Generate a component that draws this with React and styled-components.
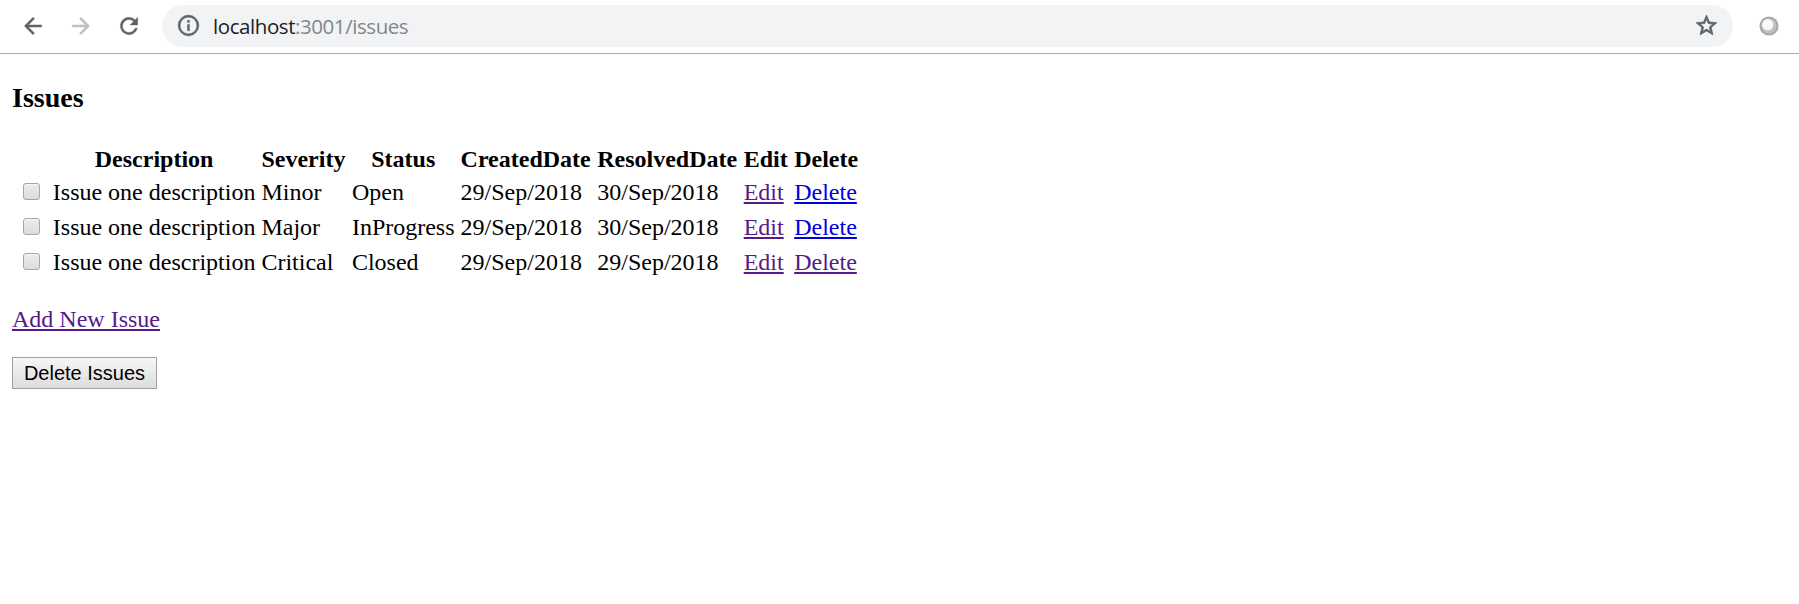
import React from "react";
import styled, { createGlobalStyle } from "styled-components";

const GlobalStyle = createGlobalStyle`
  body { margin: 0; background: #fff; color: #000; font-family: "Liberation Serif", "Times New Roman", serif; font-size: 24px; }
`;

const Toolbar = styled.header`
  box-sizing: border-box;
  display: flex;
  align-items: center;
  height: 54px;
  padding: 0 20px 2px 20px;
  border-bottom: 1px solid #a9abad;
`;

const NavButtons = styled.div`
  display: flex;
  gap: 22px;
  margin-right: 20px;
`;

const Glyph = styled.svg`
  display: block;
  flex: none;
  width: ${(p) => p.$size || 26}px;
  height: ${(p) => p.$size || 26}px;
  fill: ${(p) => p.$color || "#5f6368"};
  stroke: ${(p) => p.$color || "#5f6368"};
  stroke-width: ${(p) => p.$weight ?? 0.4};
`;

const AddressBar = styled.div`
  box-sizing: border-box;
  flex: 1;
  display: flex;
  align-items: center;
  height: 42px;
  margin-right: 26px;
  padding: 0 14px;
  border-radius: 21px;
  background: #f1f3f4;
`;

const Url = styled.span`
  flex: 1;
  margin: 1px 0 0 12px;
  font: 20.5px/28px "Open Sans", "Noto Sans", sans-serif;
  letter-spacing: -0.43px;
  color: #80868b;
  white-space: nowrap;
`;

const Host = styled.span`
  color: #202124;
`;

const Page = styled.main`
  padding: 0 12px;
`;

const Title = styled.h3`
  margin: 28px 0 27px;
  font-size: 28px;
  line-height: 32px;
`;

const Table = styled.table`
  border-collapse: separate;
  border-spacing: 3px;
  line-height: 27px;
`;

const HeadCell = styled.th`
  height: 27px;
  padding: 1.5px ${(p) => (p.$wide ? 2 : 1.5)}px 0.5px 1.5px;
  white-space: nowrap;
`;

const Cell = styled.td`
  box-sizing: border-box;
  height: 32px;
  padding: 1.5px;
  white-space: nowrap;
`;

const Checkbox = styled.input`
  appearance: none;
  box-sizing: border-box;
  display: block;
  width: 17px;
  height: 17px;
  margin: 0 7.3px 2px 6px;
  border: 1px solid #a6a6a6;
  border-radius: 3px;
  background: linear-gradient(#ececec, #dcdcdc);
  box-shadow: inset 0 1px 1px #f7f7f7;
`;

const Link = styled.a`
  color: ${(p) => (p.$visited ? "#551a8b" : "#0000dd")};
  text-decoration: underline;
  text-decoration-thickness: 2px;
  text-underline-offset: 2px;
  text-decoration-skip-ink: none;
`;

const AddRow = styled.div`
  margin-top: 25px;
  line-height: 27px;
`;

const Button = styled.button`
  box-sizing: border-box;
  display: block;
  width: 145px;
  height: 32px;
  margin-top: 24px;
  padding: 0;
  border: 1px solid #a0a0a0;
  border-radius: 0;
  background: linear-gradient(#f6f6f6, #dddddd);
  color: #000;
  font: 20px/28px "Liberation Sans", Arial, sans-serif;
  white-space: nowrap;
`;

const columns = [
  { name: "" },
  { name: "Description" },
  { name: "Severity", wide: true },
  { name: "Status" },
  { name: "CreatedDate", wide: true },
  { name: "ResolvedDate", wide: true },
  { name: "Edit", wide: true },
  { name: "Delete" },
];

const issues = [
  { id: 1, description: "Issue one description", severity: "Minor", status: "Open", created: "29/Sep/2018", resolved: "30/Sep/2018", deleteVisited: false },
  { id: 2, description: "Issue one description", severity: "Major", status: "InProgress", created: "29/Sep/2018", resolved: "30/Sep/2018", deleteVisited: false },
  { id: 3, description: "Issue one description", severity: "Critical", status: "Closed", created: "29/Sep/2018", resolved: "29/Sep/2018", deleteVisited: true },
];

const BACK = "M20 11H7.83l5.59-5.59L12 4l-8 8 8 8 1.41-1.41L7.83 13H20v-2z";
const FORWARD = "M12 4l-1.41 1.41L16.17 11H4v2h12.17l-5.58 5.59L12 20l8-8z";
const RELOAD = "M17.65 6.35A7.958 7.958 0 0 0 12 4a8 8 0 1 0 7.73 10h-2.08A6 6 0 1 1 12 6c1.66 0 3.14.69 4.22 1.78L13 11h7V4l-2.35 2.35z";
const INFO = "M11 17h2v-6h-2v6zm1-15a10 10 0 1 0 0 20 10 10 0 0 0 0-20zm0 18a8 8 0 1 1 0-16 8 8 0 0 1 0 16zM11 9h2V7h-2v2z";
const STAR = "M22 9.24l-7.19-.62L12 2 9.19 8.63 2 9.24l5.46 4.73L5.82 21 12 17.27 18.18 21l-1.63-7.03L22 9.24zM12 15.4l-3.76 2.27 1-4.28-3.32-2.88 4.38-.38L12 6.1l1.71 4.04 4.38.38-3.32 2.88 1 4.28L12 15.4z";

function Icon({ d, size, color, weight }) {
  return (
    <Glyph viewBox="0 0 24 24" $size={size} $color={color} $weight={weight} aria-hidden="true">
      <path d={d} />
    </Glyph>
  );
}

function ExtensionIcon() {
  return (
    <Glyph viewBox="0 0 20 20" $size={20} $weight={0} aria-hidden="true">
      <circle cx="10" cy="10" r="9.6" fill="#a9a9a9" />
      <circle cx="10" cy="10" r="7.4" fill="#c2c2c2" />
      <circle cx="8.7" cy="8.7" r="5.6" fill="#f8f8f8" />
    </Glyph>
  );
}

export default function App() {
  return (
    <>
      <GlobalStyle />
      <Toolbar>
        <NavButtons>
          <Icon d={BACK} />
          <Icon d={FORWARD} color="#bdbfc1" />
          <Icon d={RELOAD} />
        </NavButtons>
        <AddressBar>
          <Icon d={INFO} size={25} />
          <Url><Host>localhost</Host>:3001/issues</Url>
          <Icon d={STAR} size={25} weight={0.7} />
        </AddressBar>
        <ExtensionIcon />
      </Toolbar>
      <Page>
        <Title>Issues</Title>
        <Table>
          <thead>
            <tr>{columns.map((c) => <HeadCell key={c.name} $wide={c.wide}>{c.name}</HeadCell>)}</tr>
          </thead>
          <tbody>
            {issues.map((issue) => (
              <tr key={issue.id}>
                <Cell><Checkbox type="checkbox" /></Cell>
                <Cell>{issue.description}</Cell>
                <Cell>{issue.severity}</Cell>
                <Cell>{issue.status}</Cell>
                <Cell>{issue.created}</Cell>
                <Cell>{issue.resolved}</Cell>
                <Cell><Link href="#edit" $visited>Edit</Link></Cell>
                <Cell><Link href="#delete" $visited={issue.deleteVisited}>Delete</Link></Cell>
              </tr>
            ))}
          </tbody>
        </Table>
        <AddRow><Link href="#add" $visited>Add New Issue</Link></AddRow>
        <Button type="button">Delete Issues</Button>
      </Page>
    </>
  );
}
